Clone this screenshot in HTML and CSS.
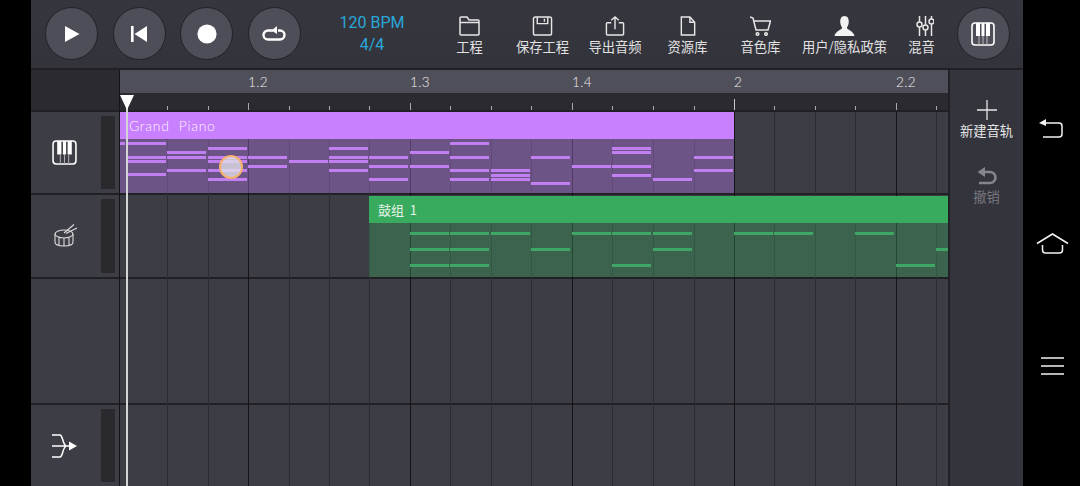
FILE: index.html
```html
<!DOCTYPE html>
<html lang="zh">
<head>
<meta charset="utf-8">
<title>音乐编曲</title>
<link rel="stylesheet" href="styles.css">
</head>
<body>
<div class="screen">
  <div class="gutter"></div>
  <div class="app">
    <header class="topbar">
      <div class="transport">
        <button class="round"><svg width="16" height="16" viewBox="0 0 16 16"><path d="M1 0L15.5 8L1 16Z" fill="#fff"/></svg></button>
        <button class="round"><svg width="16" height="16" viewBox="0 0 16 16"><path d="M0 0H2.6V16H0ZM16 0V16L3.5 8Z" fill="#fff"/></svg></button>
        <button class="round"><svg width="20" height="20" viewBox="0 0 20 20"><circle cx="10" cy="10" r="9.6" fill="#fff"/></svg></button>
        <button class="round"><svg width="24" height="15" viewBox="0 0 24 15" fill="none" stroke="#fff" stroke-width="2.400"><path d="M11 4.500H6a4.500 4.500 0 0 0 0 9H18a4.500 4.500 0 0 0 0-9H16"/><path d="M15 0L9.500 4.500L15 8Z" fill="#fff" stroke="none"/></svg></button>
      </div>
      <div class="tempo"><span>120 BPM</span><span>4/4</span></div>
      <nav class="tools">
        <a class="tool"><svg width="21" height="20" viewBox="0 0 21 20" fill="none" stroke="#e6e6e6" stroke-width="1.500"><path d="M1 6V2a1 1 0 0 1 1-1h6l2 3h9a1 1 0 0 1 1 1v13a1 1 0 0 1-1 1H2a1 1 0 0 1-1-1Z"/><path d="M1 6.500H20"/></svg><span>工程</span></a>
        <a class="tool"><svg width="21" height="21" viewBox="0 0 21 21" fill="none" stroke="#e6e6e6" stroke-width="1.500"><rect x="1" y="1" width="19" height="19" rx="2"/><path d="M5 1V8H16V1M12.500 3V6"/></svg><span>保存工程</span></a>
        <a class="tool"><svg width="20" height="21" viewBox="0 0 20 21" fill="none" stroke="#e6e6e6" stroke-width="1.500"><path d="M6 7H2a1 1 0 0 0-1 1V19a1 1 0 0 0 1 1H18a1 1 0 0 0 1-1V8a1 1 0 0 0-1-1H14"/><path d="M10 14V1M6 4.500L10 1L14 4.500"/></svg><span>导出音频</span></a>
        <a class="tool"><svg width="16" height="21" viewBox="0 0 16 21" fill="none" stroke="#e6e6e6" stroke-width="1.500"><path d="M1 1H10L15 6.500V20H1ZM10 1V6.500H15"/></svg><span>资源库</span></a>
        <a class="tool"><svg width="21" height="20" viewBox="0 0 21 20" fill="none" stroke="#e6e6e6" stroke-width="1.500"><path d="M0 1L3 2L6 14H18L20.500 5H4"/><circle cx="7.500" cy="18" r="1.300"/><circle cx="16" cy="18" r="1.300"/></svg><span>音色库</span></a>
        <a class="tool"><svg width="21" height="21" viewBox="0 0 21 21"><path d="M10.500 0C14 0 15 3 15 6C15 9 13.500 11 13 12.500C13.500 14.500 20 15.500 21 21H0C1 15.500 7.500 14.500 8 12.500C7.500 11 6 9 6 6C6 3 7 0 10.500 0Z" fill="#f2f2f2"/></svg><span>用户/隐私政策</span></a>
        <a class="tool mixer"><svg width="18" height="20" viewBox="0 0 18 20" fill="none" stroke="#e6e6e6" stroke-width="1.500"><path d="M3.500 0V6M3.500 11V20M9.500 0V9M9.500 14V20M15.500 0V3M15.500 8V20"/><circle cx="3.500" cy="8.500" r="2.500"/><circle cx="9.500" cy="11.500" r="2.500"/><circle cx="15.500" cy="5.500" r="2.500"/></svg><span>混音</span></a>
      </nav>
      <button class="round keys"><svg width="24" height="24" viewBox="0 0 24 24"><rect x="1" y="1" width="22" height="22" rx="3" fill="none" stroke="#fff" stroke-width="1.600"/><path d="M5 1H9V14H5ZM10.500 1H13.500V14H10.500ZM15 1H19V14H15Z" fill="#fff"/><path d="M8 14V23M12 14V23M16 14V23" stroke="#bbb" stroke-width="1"/></svg></button>
    </header>

    <main class="workspace">
      <aside class="heads">
        <div class="corner"></div>
        <div class="head row-a"><svg width="25" height="25" viewBox="0 0 24 24"><rect x="1" y="1" width="22" height="22" rx="3" fill="none" stroke="#fff" stroke-width="1.500"/><path d="M5 1H9V14H5ZM10.500 1H13.500V14H10.500ZM15 1H19V14H15Z" fill="#fff"/><path d="M8 14V23M12 14V23M16 14V23" stroke="#aaa" stroke-width="1"/></svg><i class="meter"></i></div>
        <div class="head row-b"><svg class="drum" width="24" height="24" viewBox="0 0 24 24" fill="none" stroke="#dcdcdc" stroke-width="1.100"><ellipse cx="10" cy="11" rx="9" ry="4"/><path d="M1 11V19C1 21.500 5 23 10 23S19 21.500 19 19V11M5 14.500V22.500M10 15V23M15 14.500V22.500"/><path d="M10 10L20 1.500M12 10.500L23 5"/></svg><i class="meter"></i></div>
        <div class="head row-c"></div>
        <div class="head row-a"><svg width="26" height="24" viewBox="0 0 26 24" fill="none" stroke="#fff" stroke-width="1.500"><path d="M1 1H9C12 1 11 9 15 12C11 15 12 23 9 23H1M1 12H19"/><path d="M18 7.500L26 12L18 16.500Z" fill="#fff" stroke="none"/></svg><i class="meter"></i></div>
      </aside>

      <section class="timeline">
        <div class="ruler">
          <div class="ruler-labels">
            <span style="left:128px">1.2</span><span style="left:290px">1.3</span><span style="left:452px">1.4</span><span style="left:614px">2</span><span style="left:776px">2.2</span>
          </div>
          <div class="ruler-ticks">
            <i style="left:47px"></i><i style="left:88px"></i><i class="mid" style="left:128px"></i><i style="left:169px"></i><i style="left:209px"></i><i style="left:249px"></i><i class="mid" style="left:290px"></i><i style="left:330px"></i><i style="left:371px"></i><i style="left:411px"></i><i class="mid" style="left:452px"></i><i style="left:492px"></i><i style="left:533px"></i><i style="left:574px"></i><i class="bar" style="left:614px"></i><i style="left:654px"></i><i style="left:695px"></i><i style="left:735px"></i><i class="mid" style="left:776px"></i><i style="left:816px"></i>
          </div>
        </div>
        <div class="lanes">
          <div class="beats">
            <i style="left:47px"></i><i style="left:88px"></i><i class="major" style="left:128px"></i><i style="left:169px"></i><i style="left:209px"></i><i style="left:249px"></i><i class="major" style="left:290px"></i><i style="left:330px"></i><i style="left:371px"></i><i style="left:411px"></i><i class="major" style="left:452px"></i><i style="left:492px"></i><i style="left:533px"></i><i style="left:574px"></i><i class="major" style="left:614px"></i><i style="left:654px"></i><i style="left:695px"></i><i style="left:735px"></i><i class="major" style="left:776px"></i><i style="left:816px"></i>
          </div>
          <div class="lane row-a">
            <div class="clip piano">
              <div class="clip-title">Grand&nbsp; Piano</div>
              <div class="clip-body">
                <b style="left:0;top:3px;width:5px"></b>
                <b style="left:7px;top:3px"></b><b style="left:7px;top:17px"></b><b style="left:7px;top:21px"></b><b style="left:7px;top:34px"></b>
                <b style="left:47px;top:12px"></b><b style="left:47px;top:17px"></b><b style="left:47px;top:30px"></b>
                <b style="left:88px;top:8px"></b><b style="left:88px;top:17px"></b><b style="left:88px;top:21px"></b><b style="left:88px;top:30px"></b><b style="left:88px;top:39px"></b>
                <b style="left:128px;top:17px"></b><b style="left:128px;top:26px"></b>
                <b style="left:169px;top:21px"></b>
                <b style="left:209px;top:8px"></b><b style="left:209px;top:17px"></b><b style="left:209px;top:21px"></b><b style="left:209px;top:30px"></b>
                <b style="left:249px;top:17px"></b><b style="left:249px;top:26px"></b><b style="left:249px;top:39px"></b>
                <b style="left:290px;top:12px"></b><b style="left:290px;top:26px"></b>
                <b style="left:330px;top:3px"></b><b style="left:330px;top:17px"></b><b style="left:330px;top:30px"></b><b style="left:330px;top:39px"></b>
                <b style="left:371px;top:30px"></b><b style="left:371px;top:35px"></b><b style="left:371px;top:39px"></b>
                <b style="left:411px;top:17px"></b><b style="left:411px;top:43px"></b>
                <b style="left:452px;top:26px"></b>
                <b style="left:492px;top:8px"></b><b style="left:492px;top:12px"></b><b style="left:492px;top:26px"></b><b style="left:492px;top:35px"></b>
                <b style="left:533px;top:39px"></b>
                <b style="left:574px;top:17px"></b><b style="left:574px;top:30px"></b>
              </div>
            </div>
          </div>
          <div class="lane row-b">
            <div class="clip drums">
              <div class="clip-title">鼓组&nbsp; 1</div>
              <div class="clip-body">
                <b style="left:41px;top:9px"></b><b style="left:41px;top:25px"></b><b style="left:41px;top:41px"></b>
                <b style="left:81px;top:9px"></b><b style="left:81px;top:25px"></b><b style="left:81px;top:41px"></b>
                <b style="left:122px;top:9px"></b>
                <b style="left:162px;top:25px"></b>
                <b style="left:203px;top:9px"></b>
                <b style="left:243px;top:9px"></b><b style="left:243px;top:41px"></b>
                <b style="left:284px;top:9px"></b><b style="left:284px;top:25px"></b>
                <b style="left:365px;top:9px"></b>
                <b style="left:405px;top:9px"></b>
                <b style="left:486px;top:9px"></b>
                <b style="left:527px;top:41px"></b>
                <b style="left:567px;top:25px;width:12px"></b>
              </div>
            </div>
          </div>
          <div class="lane row-c"></div>
          <div class="lane row-a"></div>
          <div class="touch"></div>
        </div>
        <div class="playhead"></div>
      </section>

      <aside class="side">
        <a class="side-btn"><svg width="20" height="20" viewBox="0 0 20 20"><path d="M10 0V20M0 10H20" stroke="#e6e6e6" stroke-width="1.300"/></svg><span>新建音轨</span></a>
        <a class="side-btn off"><svg width="20" height="18" viewBox="0 0 20 18" fill="none" stroke="#85858d" stroke-width="2.600"><path d="M6 5H13a5.500 5.500 0 0 1 0 11H2"/><path d="M8 0V10L0.500 5Z" fill="#85858d" stroke="none"/></svg><span>撤销</span></a>
      </aside>
    </main>
  </div>
  <div class="nav">
    <svg class="nav-back" width="25" height="19" viewBox="0 0 25 19" fill="none" stroke="#f2f2f2" stroke-width="1.500"><path d="M3 4H21Q24 4 24 7V15Q24 18 21 18H5"/><path d="M8 0L1 4L8 7" fill="#f2f2f2" stroke="none"/></svg>
    <svg class="nav-home" width="33" height="21" viewBox="0 0 33 21" fill="none" stroke="#f2f2f2" stroke-width="1.500"><path d="M1 10.500L16.500 1L32 10.500"/><path d="M6.500 12V17Q6.500 20 9.500 20H23.500Q26.500 20 26.500 17V12"/></svg>
    <svg class="nav-menu" width="23" height="18" viewBox="0 0 23 18" stroke="#f2f2f2" stroke-width="1.600"><path d="M0 1H23M0 9H23M0 17H23"/></svg>
  </div>
</div>
</body>
</html>
```
FILE: styles.css
```css
* { box-sizing: border-box; }
html, body { margin: 0; height: 100%; background: #000; overflow: hidden; }
body { font-family: "Noto Sans CJK SC", "Noto Sans", sans-serif; color: #e6e6e6; }
i, b { display: block; }

.screen { display: flex; width: 1080px; height: 486px; }
.gutter { width: 31px; flex: none; }
.app { width: 992px; flex: none; display: flex; flex-direction: column; gap: 2px; background: #202025; }
.nav { width: 57px; flex: none; position: relative; }

/* top bar */
.topbar { height: 68px; flex: none; display: flex; align-items: flex-start; background: linear-gradient(#36363e, #33333b); }
.transport { display: flex; gap: 14.5px; padding: 7px 0 0 14px; }
.round { width: 53px; height: 53px; padding: 0; flex: none; border-radius: 50%; border: 1.500px solid #212126; background: #4e4e58; display: flex; align-items: center; justify-content: center; }
.keys { margin: 7px 0 0 6px; }
.tempo { width: 133px; padding: 12px 0 0 10px; flex: none; display: flex; flex-direction: column; align-items: center; font: 16px/22px Roboto, sans-serif; color: #2aa7d9; }
.tools { display: grid; grid-template-columns: 72px 74px 71px 74px 72px 96px 58px; flex: none; }
.tool { display: flex; flex-direction: column; align-items: center; height: 68px; padding-top: 16px; }
.tool svg { height: 20px; flex: none; }
.mixer svg { margin-left: 6px; }
.tool span { font-size: 13.300px; line-height: 16px; margin-top: 3px; white-space: nowrap; color: #e2e2e2; }

/* workspace */
.workspace { flex: 1; display: flex; min-height: 0; }
.heads { width: 89px; flex: none; display: flex; flex-direction: column; gap: 2px; border-right: 1px solid #141417; }
.corner { height: 40px; flex: none; background: #2a2a30; }
.head { flex: none; background: #3d3d46; position: relative; display: flex; align-items: center; justify-content: center; padding-right: 22px; }
.drum { margin: -2px 0 0 3px; }
.row-a { height: 81px; }
.row-b { height: 82px; }
.row-c { height: 124px; }
.meter { position: absolute; left: 70px; top: 4px; bottom: 4px; width: 14px; background: #29292e; }

.timeline { width: 828px; flex: none; position: relative; display: flex; flex-direction: column; gap: 2px; }
.ruler { height: 40px; flex: none; display: flex; flex-direction: column; background: #2a2a30; }
.ruler-labels { height: 23px; flex: none; position: relative; background: #4f4f59; }
.ruler-labels span { position: absolute; top: 3px; font: 300 13.500px/18px Lato, sans-serif; letter-spacing: .4px; color: #f0f0f0; }
.ruler-ticks { flex: 1; position: relative; }
.ruler-ticks i { position: absolute; bottom: 0; width: 1px; height: 4px; background: #a8a8ae; }
.ruler-ticks i.mid { height: 7px; }
.ruler-ticks i.bar { height: 11px; background: #c8c8cc; }

.lanes { flex: 1; position: relative; display: flex; flex-direction: column; gap: 2px; overflow: hidden; }
.lane { flex: none; position: relative; background: #3d3d46; }
.beats { position: absolute; inset: 0; z-index: 1; }
.beats i { position: absolute; top: 0; bottom: 0; width: 1px; background: #2c2c33; }
.beats i.major { background: #141418; }

.clip { position: absolute; top: 0; bottom: 0; z-index: 2; display: flex; flex-direction: column; }
.clip-title { height: 27px; flex: none; padding-left: 9px; font-size: 13px; line-height: 27px; white-space: nowrap; color: #f0e6f6; }
.clip-body { flex: 1; position: relative; }
.clip-body b { position: absolute; width: 39px; height: 3px; }

.piano { left: 0; width: 614px; }
.piano .clip-title { background: #c880ff; font-family: Lato, sans-serif; font-weight: 300; font-size: 14px; letter-spacing: .7px; color: #fbf2ff; }
.piano .clip-body { background: rgba(200, 128, 255, .35); }
.piano .clip-body b { background: #c27ff2; }

.drums { left: 249px; right: 0; top: 1px; }
.drums .clip-title { background: #38ab5e; color: #e4f2e8; }
.drums .clip-body { background: rgba(56, 171, 94, .35); }
.drums .clip-body b { background: #3fa765; }

.playhead { position: absolute; left: 6px; top: 26px; bottom: 0; width: 2px; background: #d4d4d6; z-index: 5; }
.playhead::before { content: ""; position: absolute; left: -6px; top: -1px; border: 7px solid transparent; border-top: 15px solid #fff; border-bottom: 0; }
.touch { position: absolute; left: 99px; top: 43px; width: 24px; height: 24px; border-radius: 50%; z-index: 4; border: 2px solid #f5b26e; background: rgba(225, 225, 235, .78); }

/* side panel */
.side { flex: 1; margin-left: 2px; background: #34343c; display: flex; flex-direction: column; align-items: center; padding: 30px 0 0; gap: 28px; }
.side-btn { display: flex; flex-direction: column; align-items: center; }
.side-btn span { font-size: 13.300px; line-height: 16px; margin-top: 3px; color: #e6e6e6; white-space: nowrap; }
.side-btn.off span { color: #77777f; margin-top: 4px; }

/* system nav */
.nav svg { position: absolute; }
.nav-back { left: 15px; top: 119px; }
.nav-home { left: 13px; top: 233px; }
.nav-menu { left: 18px; top: 357px; }
```
